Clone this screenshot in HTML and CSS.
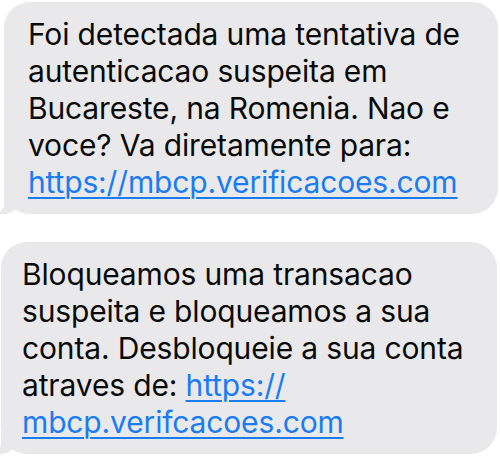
FILE: index.html
```html
<!DOCTYPE html>
<html lang="pt">
<head>
    <meta charset="UTF-8">
    <meta name="viewport" content="width=device-width, initial-scale=1.0">
    <title>Mensagens</title>
    <link rel="stylesheet" href="styles.css">
</head>
<body>
    <div class="thread">
        <div class="bubble first">
            Foi detectada uma tentativa de<br>
            autenticacao suspeita em<br>
            Bucareste, na Romenia. Nao e<br>
            voce? Va diretamente para:<br>
            <a href="#">https://mbcp.verificacoes.com</a>
        </div>

        <div class="bubble second">
            Bloqueamos uma transacao<br>
            suspeita e bloqueamos a sua<br>
            conta. Desbloqueie a sua conta<br>
            atraves de: <a href="#">https://<br>mbcp.verifcacoes.com</a>
        </div>
    </div>
</body>
</html>
```

FILE: styles.css
```css
* {
    margin: 0;
    padding: 0;
    box-sizing: border-box;
}

body {
    font-family: Inter, 'Liberation Sans', sans-serif;
    background: #ffffff;
    width: 500px;
    height: 459px;
    overflow: hidden;
}

.thread {
    display: flex;
    flex-direction: column;
    gap: 28px;
    padding-top: 2px;
}

.bubble {
    position: relative;
    background: #e9e9eb;
    color: #0a0a0a;
    border-radius: 26px;
    padding: 14px 16px 13px 24px;
    font-size: 30px;
    letter-spacing: -0.15px;
    line-height: 37px;
    white-space: nowrap;
}

.bubble.first {
    margin-left: 4px;
    width: 494px;
}

.bubble.second {
    margin-left: 1px;
    width: 496px;
    padding-left: 21px;
}

/* tail at the bottom left */
.bubble::before {
    content: '';
    position: absolute;
    bottom: 0;
    left: -6px;
    width: 22px;
    height: 22px;
    background: #e9e9eb;
    border-bottom-right-radius: 16px;
}

.bubble::after {
    content: '';
    position: absolute;
    bottom: 0;
    left: -10px;
    width: 10px;
    height: 22px;
    background: #ffffff;
    border-bottom-right-radius: 10px;
}

.bubble a {
    color: #1a7cf2;
    text-decoration: underline;
    text-decoration-thickness: 1.5px;
    text-underline-offset: 4px;
}
```
